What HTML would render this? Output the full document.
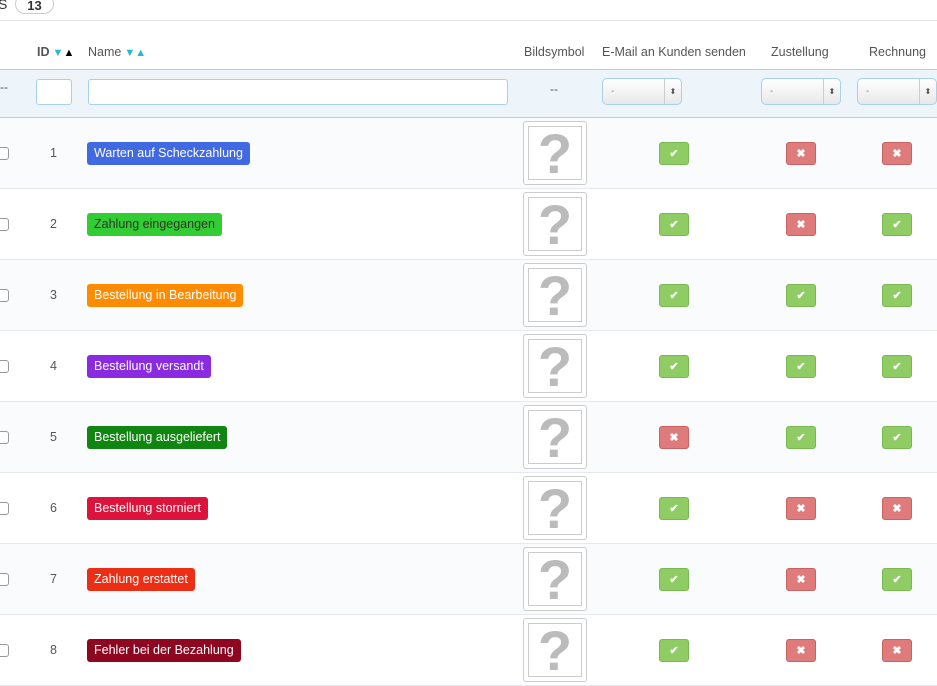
<!DOCTYPE html>
<html><head><meta charset="utf-8"><style>
*{box-sizing:border-box;margin:0;padding:0}
body{width:937px;height:667px;overflow:hidden;background:#fff;font-family:"Liberation Sans",sans-serif;color:#555;font-size:12px;position:relative}
.a{position:absolute}
.hdr{top:45px;font-size:12.5px;color:#555;white-space:nowrap}
.row{position:absolute;left:0;width:937px;height:71px;border-bottom:1px solid #e6e9ee}
.cb{position:absolute;left:-4px;width:13px;height:13px;border:1px solid #999;border-radius:3px;background:#fff}
.id{position:absolute;left:50px;font-size:12.5px;color:#555}
.bd{position:absolute;left:87px;height:23px;line-height:23px;padding:0 7px;border-radius:3px;color:#fff;font-size:12.5px;white-space:nowrap}
.img{position:absolute;left:523px;width:64px;height:64px;border:1px solid #ccc;border-radius:3px;background:#fff}
.img div{position:absolute;left:4px;top:4px;width:54px;height:54px;border:1px solid #ccc;text-align:center;font:bold 56px/54px "Liberation Sans",sans-serif;color:#bbb}
.ic{position:absolute;width:30px;height:23px;border-radius:3px;text-align:center;line-height:22px;color:#fff;font-weight:bold;font-size:11px}
.y{background:#8fcc64;border:1px solid #7ab853}
.n{background:#e07b7b;border:1px solid #c96262}
.sel{position:absolute;top:78px;height:27px;border:1px solid #a8d0ea;border-radius:5px;background:linear-gradient(#fff,#e8e8e8);font-size:10px;color:#888;padding:7px 0 0 8px}
.sel i{position:absolute;right:0;top:0;width:17px;height:25px;border-left:1px solid #ccc;font-style:normal;font-size:8px;color:#555;text-align:center;line-height:25px}
.ar{font-size:11px}
</style></head><body>
<div class="a" style="left:-2px;top:-4px;font-size:14px;color:#333">S</div>
<div class="a" style="left:15px;top:-6px;width:39px;height:20px;border:1px solid #ccc;border-radius:10px;text-align:center;font-weight:bold;font-size:13px;color:#333;line-height:22px">13</div>
<div class="a" style="left:0;top:20px;width:937px;border-top:1px solid #e5e5e5"></div>
<div class="a hdr" style="left:37px;font-weight:bold">ID<span class="ar" style="color:#25b9d7"> ▼</span><span class="ar" style="color:#000">▲</span></div>
<div class="a hdr" style="left:88px">Name<span class="ar" style="color:#25b9d7"> ▼▲</span></div>
<div class="a hdr" style="left:524px">Bildsymbol</div>
<div class="a hdr" style="left:602px">E-Mail an Kunden senden</div>
<div class="a hdr" style="left:771px">Zustellung</div>
<div class="a hdr" style="left:869px">Rechnung</div>
<div class="a" style="left:0;top:69px;width:937px;height:49px;background:#edf5fb;border-top:1px solid #a8d4ec;border-bottom:1px solid #a8d4ec"></div>
<div class="a" style="left:0;top:80px;color:#555">--</div>
<div class="a" style="left:36px;top:79px;width:36px;height:26px;border:1px solid #a8d0ea;border-radius:3px;background:#fff"></div>
<div class="a" style="left:88px;top:79px;width:420px;height:26px;border:1px solid #a8d0ea;border-radius:3px;background:#fff"></div>
<div class="a" style="left:550px;top:82px;color:#555">--</div>
<div class="sel" style="left:602px;width:80px">-<i>⬍</i></div>
<div class="sel" style="left:761px;width:80px">-<i>⬍</i></div>
<div class="sel" style="left:857px;width:80px">-<i>⬍</i></div>

<div id="rows"></div>
<script>
var d=[["Warten auf Scheckzahlung","#4169e1","#fff",1,0,0],["Zahlung eingegangen","#32cd32","#333",1,0,1],["Bestellung in Bearbeitung","#ff8c00","#fff",1,1,1],["Bestellung versandt","#8a2be2","#fff",1,1,1],["Bestellung ausgeliefert","#108510","#fff",0,1,1],["Bestellung storniert","#dc143c","#fff",1,0,0],["Zahlung erstattet","#ec2e15","#fff",1,0,1],["Fehler bei der Bezahlung","#8f0621","#fff",1,0,0]];
var h="";
d.forEach(function(r,i){var t=118+i*71;
h+='<div class="row" style="top:'+t+'px;background:'+(i%2?'#fff':'#fafbfd')+'">'+
'<div class="cb" style="top:29px"></div><div class="id" style="top:28px">'+(i+1)+'</div>'+
'<div class="bd" style="top:24px;background:'+r[1]+';color:'+r[2]+'">'+r[0]+'</div>'+
'<div class="img" style="top:3px"><div>?</div></div>';
[[659,r[3]],[786,r[4]],[882,r[5]]].forEach(function(c){h+='<div class="ic '+(c[1]?'y':'n')+'" style="left:'+c[0]+'px;top:24px">'+(c[1]?'✔':'✖')+'</div>'});
h+='</div>';});
document.getElementById('rows').innerHTML=h;
</script>
</body></html>
